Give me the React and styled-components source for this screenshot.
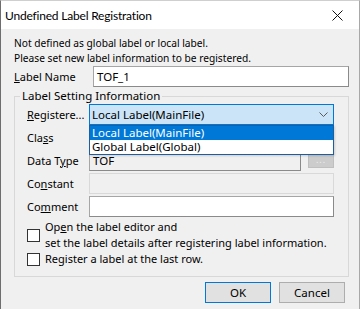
import React from "react";
import styled, { createGlobalStyle } from "styled-components";

const GlobalStyle = createGlobalStyle`
  html, body {
    margin: 0;
    padding: 0;
    background: #f0f0f0;
  }
  body {
    font-family: "Noto Sans", "Liberation Sans", sans-serif;
    color: #000000;
  }
`;

const Window = styled.div`
  width: 360px;
  height: 309px;
  box-sizing: border-box;
  border-left: 1px solid #6e6e6e;
  border-right: 1px solid #a8a8a8;
  border-top: 1px solid #cfcfcf;
  background: #f0f0f0;
  display: flex;
  flex-direction: column;
  overflow: hidden;
`;

const TitleBar = styled.div`
  height: 28px;
  background: #ffffff;
  display: flex;
  align-items: center;
  justify-content: space-between;
  padding-left: 4px;
`;

const Title = styled.div`
  font-family: Lato, "Noto Sans", sans-serif;
  font-size: 12px;
  letter-spacing: -0.2px;
  color: #000000;
`;

const CloseButton = styled.div`
  width: 44px;
  height: 28px;
  display: flex;
  align-items: center;
  justify-content: center;
`;

const Body = styled.div`
  flex: 1;
  padding: 7px 10px 0 13px;
  font-size: 11px;
`;

const Message = styled.div`
  font-size: 10.2px;
  line-height: 15px;
  white-space: pre-line;
`;

const NameRow = styled.div`
  display: flex;
  align-items: center;
  height: 21px;
`;

const NameLabel = styled.div`
  width: 79px;
`;

const TextBox = styled.div`
  box-sizing: border-box;
  height: 21px;
  flex: ${(p) => (p.$grow ? 1 : "none")};
  background: ${(p) => (p.$disabled || p.$readonly ? "#f0f0f0" : "#ffffff")};
  border: 1px solid ${(p) => (p.$disabled ? "#d9d9d9" : "#a6a6a6")};
  border-right-color: ${(p) => (p.$disabled ? "#d9d9d9" : "#8a8a8a")};
  border-bottom-color: ${(p) => (p.$disabled ? "#d9d9d9" : "#8a8a8a")};
  padding: 0 3px;
  display: flex;
  align-items: center;
  font-size: 11.5px;
`;

const Group = styled.fieldset`
  margin: 2px 0 0 0;
  padding: 1px 14px 9px 12px;
  border: 1px solid #d8d8d8;
  min-width: 0;
`;

const Legend = styled.legend`
  margin-left: -7px;
  padding: 0 2px;
  line-height: 14px;
  font-size: 11.5px;
`;

const FormGrid = styled.div`
  display: grid;
  grid-template-columns: 62px 1fr;
  grid-auto-rows: 21px;
  row-gap: 2px;
  align-items: center;
`;

const FieldLabel = styled.div`
  white-space: nowrap;
`;

const ComboWrap = styled.div`
  position: relative;
  height: 21px;
`;

const Combo = styled.div`
  box-sizing: border-box;
  height: 21px;
  background: ${(p) => (p.$open ? "#cce4f7" : "#e1e1e1")};
  border: 1px solid ${(p) => (p.$open ? "#0078d7" : "#adadad")};
  display: flex;
  align-items: center;
  justify-content: space-between;
  padding: 0 5px 0 2px;
  font-size: 11.5px;
`;

const DropList = styled.div`
  position: absolute;
  top: 21px;
  left: 0;
  right: 0;
  z-index: 2;
  background: #ffffff;
  border: 1px solid #1f5e9e;
  box-shadow: 1px 1px 2px rgba(0, 0, 0, 0.15);
  font-size: 11.5px;
`;

const DropItem = styled.div`
  height: 14px;
  line-height: 14px;
  padding-left: 2px;
  background: ${(p) => (p.$active ? "#0078d7" : "#ffffff")};
  color: ${(p) => (p.$active ? "#ffffff" : "#000000")};
`;

const InputRow = styled.div`
  display: flex;
  align-items: center;
  gap: 7px;
`;

const BrowseButton = styled.div`
  box-sizing: border-box;
  width: 26px;
  height: 14px;
  background: #cccccc;
  border: 1px solid #bfbfbf;
  color: #eeeeee;
  font-size: 9px;
  line-height: 9px;
  text-align: center;
  letter-spacing: 1px;
`;

const Checks = styled.div`
  margin-top: 2px;
  display: flex;
  flex-direction: column;
`;

const CheckRow = styled.div`
  display: flex;
  align-items: center;
  gap: 5px;
  line-height: 16px;
`;

const CheckBox = styled.div`
  box-sizing: border-box;
  width: 13px;
  height: 13px;
  flex: none;
  background: #ffffff;
  border: 1px solid #333333;
`;

const Footer = styled.div`
  display: flex;
  justify-content: flex-end;
  gap: 8px;
  margin: 5px 4px 0 0;
`;

const Button = styled.div`
  box-sizing: border-box;
  width: 66px;
  height: 21px;
  background: #e1e1e1;
  border: 1px solid ${(p) => (p.$default ? "#0078d7" : "#adadad")};
  display: flex;
  align-items: center;
  justify-content: center;
  font-size: 11.5px;
`;

function Chevron() {
  return (
    <svg width="9" height="5" viewBox="0 0 9 5">
      <path d="M0.5 0.5 L4.5 4.5 L8.5 0.5" fill="none" stroke="#5a5a5a" strokeWidth="1" />
    </svg>
  );
}

function App() {
  return (
    <Window>
      <GlobalStyle />
      <TitleBar>
        <Title>Undefined Label Registration</Title>
        <CloseButton>
          <svg width="11" height="11" viewBox="0 0 11 11">
            <path d="M0.5 0.5 L10.5 10.5 M10.5 0.5 L0.5 10.5" stroke="#111" strokeWidth="1" />
          </svg>
        </CloseButton>
      </TitleBar>
      <Body>
        <Message>
          {"Not defined as global label or local label.\nPlease set new label information to be registered."}
        </Message>
        <NameRow>
          <NameLabel><u>L</u>abel Name</NameLabel>
          <TextBox $grow>TOF_1</TextBox>
        </NameRow>
        <Group>
          <Legend>Label Setting Information</Legend>
          <FormGrid>
            <FieldLabel><u>R</u>egistere...</FieldLabel>
            <ComboWrap>
              <Combo $open>
                <span>Local Label(MainFile)</span>
                <Chevron />
              </Combo>
              <DropList>
                <DropItem $active>Local Label(MainFile)</DropItem>
                <DropItem>Global Label(Global)</DropItem>
              </DropList>
            </ComboWrap>
            <FieldLabel>Cla<u>s</u>s</FieldLabel>
            <Combo>
              <span></span>
              <Chevron />
            </Combo>
            <FieldLabel>Data T<u>y</u>pe</FieldLabel>
            <InputRow>
              <TextBox $grow $readonly>TOF</TextBox>
              <BrowseButton>...</BrowseButton>
            </InputRow>
            <FieldLabel>Co<u>n</u>stant</FieldLabel>
            <TextBox $disabled />
            <FieldLabel>Co<u>m</u>ment</FieldLabel>
            <TextBox />
          </FormGrid>
          <Checks>
            <CheckRow>
              <CheckBox />
              <span>
                Op<u>e</u>n the label editor and
                <br />
                set the label details after registering label information.
              </span>
            </CheckRow>
            <CheckRow>
              <CheckBox />
              <span>Re<u>g</u>ister a label at the last row.</span>
            </CheckRow>
          </Checks>
        </Group>
        <Footer>
          <Button $default>OK</Button>
          <Button>Cancel</Button>
        </Footer>
      </Body>
    </Window>
  );
}

export default App;
